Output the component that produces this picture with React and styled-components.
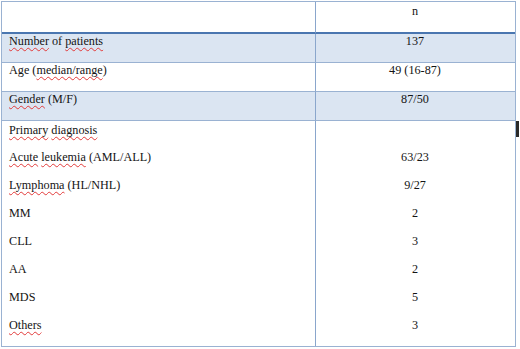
import styled, { createGlobalStyle } from 'styled-components'

const GlobalStyle = createGlobalStyle`
  html, body {
    margin: 0;
    padding: 0;
    background: #ffffff;
  }
  body {
    font-family: "Liberation Serif", "Times New Roman", serif;
    color: #141414;
  }
`

const Page = styled.div`
  position: relative;
  width: 520px;
  height: 349px;
  padding: 1px 0 0 1px;
  box-sizing: border-box;
`

const Table = styled.div`
  width: 515px;
  border: 1px solid #9ab2d2;
  box-sizing: border-box;
  display: grid;
  grid-template-columns: 313px 1fr;
`

const Cell = styled.div`
  height: ${(p) => p.$height}px;
  box-sizing: border-box;
  background: ${(p) => (p.$shaded ? '#dbe5f2' : '#ffffff')};
  border-bottom: ${(p) => p.$rule || 'none'};
  padding: ${(p) => p.$padTop}px 8px 0 7px;
  font-size: 12.2px;
  line-height: 12px;
  text-align: ${(p) => (p.$center ? 'center' : 'left')};
  white-space: nowrap;
  ${(p) => p.$center && 'border-left: 1px solid #8aa6cc;'}
`

const Misspelt = styled.span`
  text-decoration: underline wavy #e23a3a;
  text-decoration-thickness: 1px;
  text-underline-offset: 2px;
  text-decoration-skip-ink: none;
`

const Caret = styled.div`
  position: absolute;
  left: 516px;
  top: 121px;
  width: 3px;
  height: 16px;
  background: #2a2a2a;
`

const thin = '1px solid #9ab2d2'
const thick = '2px solid #4a76b0'

const rows = [
  { label: [<Misspelt key="a">Number</Misspelt>, ' of ', <Misspelt key="b">patients</Misspelt>], value: '137', shaded: true, height: 29, pad: 1, rule: thin },
  { label: ['Age (', <Misspelt key="a">median/range</Misspelt>, ')'], value: '49 (16-87)', height: 29, pad: 1, rule: thin },
  { label: [<Misspelt key="a">Gender</Misspelt>, ' (M/F)'], value: '87/50', shaded: true, height: 29, pad: 1, rule: thin },
  { label: [<Misspelt key="a">Primary</Misspelt>, ' ', <Misspelt key="b">diagnosis</Misspelt>], value: '', height: 28, pad: 3 },
  { label: [<Misspelt key="a">Acute</Misspelt>, ' ', <Misspelt key="b">leukemia</Misspelt>, ' (AML/ALL)'], value: '63/23', height: 28, pad: 2 },
  { label: [<Misspelt key="a">Lymphoma</Misspelt>, ' (HL/NHL)'], value: '9/27', height: 28, pad: 2 },
  { label: ['MM'], value: '2', height: 28, pad: 2 },
  { label: ['CLL'], value: '3', height: 28, pad: 2 },
  { label: ['AA'], value: '2', height: 28, pad: 2 },
  { label: ['MDS'], value: '5', height: 28, pad: 2 },
  { label: [<Misspelt key="a">Others</Misspelt>], value: '3', height: 29, pad: 2 },
]

export default function App() {
  return (
    <Page>
      <GlobalStyle />
      <Table>
        <Cell $height={32} $padTop={3} $rule={thick} />
        <Cell $height={32} $padTop={3} $rule={thick} $center>n</Cell>
        {rows.map((row, i) => [
          <Cell key={`l${i}`} $height={row.height} $padTop={row.pad} $shaded={row.shaded} $rule={row.rule}>
            {row.label}
          </Cell>,
          <Cell key={`r${i}`} $height={row.height} $padTop={row.pad} $shaded={row.shaded} $rule={row.rule} $center>
            {row.value}
          </Cell>,
        ])}
      </Table>
      <Caret />
    </Page>
  )
}
